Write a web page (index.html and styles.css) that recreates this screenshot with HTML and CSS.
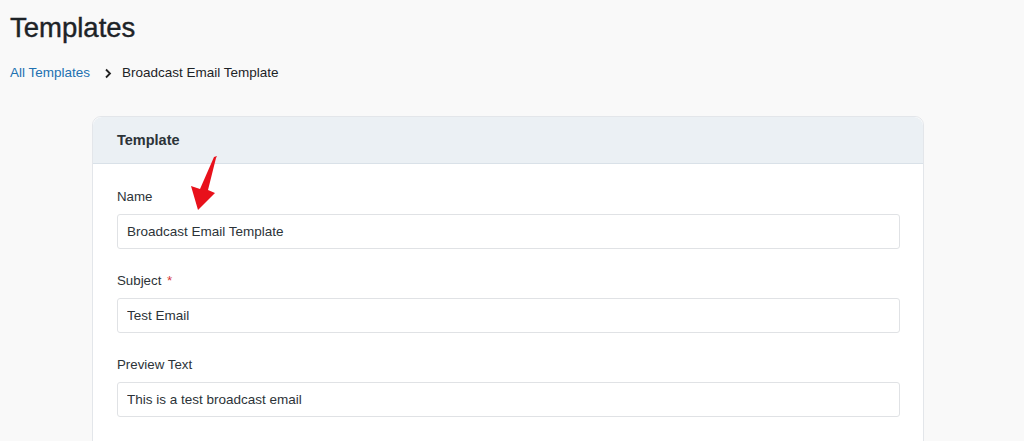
FILE: index.html
```html
<!DOCTYPE html>
<html>
<head>
    <title>Templates</title>
    <link rel="stylesheet" href="styles.css">
</head>
<body>
    <div class="page">
        <h1 class="page-title">Templates</h1>
        <div class="breadcrumb">
            <a href="#" class="crumb-link">All Templates</a>
            <svg class="crumb-sep" width="8" height="11" viewBox="0 0 8 11"><path d="M2 1.5 L6 5.5 L2 9.5" fill="none" stroke="#222" stroke-width="1.8"/></svg>
            <span class="crumb-current">Broadcast Email Template</span>
        </div>

        <div class="card">
            <div class="card-header">Template</div>
            <div class="card-body">
                <svg class="pointer" width="40" height="60" viewBox="0 0 40 60">
                    <path d="M34 2 L33 4 L25 36 L32 39 L15 56 L8 32 L17 35 L31 3 Z" fill="#e8111b"/>
                </svg>
                <div class="field">
                    <label>Name</label>
                    <input type="text" value="Broadcast Email Template">
                </div>
                <div class="field">
                    <label>Subject <span class="req">*</span></label>
                    <input type="text" value="Test Email">
                </div>
                <div class="field">
                    <label>Preview Text</label>
                    <input type="text" value="This is a test broadcast email">
                </div>
            </div>
        </div>
    </div>
</body>
</html>
```

FILE: styles.css
```css
body {
    margin: 0;
    font-family: "Liberation Sans", Arial, sans-serif;
    background: #f9f9f9;
    color: #2c3338;
}
.page {
    padding: 10px 10px 0;
}
.page-title {
    margin: 0;
    font-size: 27.5px;
    font-weight: normal;
    line-height: 36px;
    color: #1d2327;
    -webkit-text-stroke: 0.4px #1d2327;
}
.breadcrumb {
    display: flex;
    align-items: center;
    margin-top: 18px;
    font-size: 13.5px;
    line-height: 18px;
}
.crumb-link {
    color: #2271b1;
    text-decoration: none;
}
.crumb-sep {
    margin: 0 10px 0 14px;
}
.crumb-current {
    color: #1d2327;
}
.card {
    margin: 34px 0 0 82px;
    width: 830px;
    height: 400px;
    background: #fff;
    border: 1px solid #e3e6ea;
    border-radius: 9px;
}
.card-header {
    height: 46px;
    line-height: 46px;
    padding: 0 24px;
    background: #ebf0f4;
    border-bottom: 1px solid #d9e1e8;
    border-radius: 9px 9px 0 0;
    font-size: 14.5px;
    font-weight: bold;
    color: #2c3338;
}
.card-body {
    position: relative;
    padding: 25px 23px 0 24px;
}
.pointer {
    position: absolute;
    left: 90px;
    top: -10px;
}
.field {
    margin-bottom: 24px;
}
.field label {
    display: block;
    font-size: 13.3px;
    line-height: 16px;
    margin-bottom: 9px;
    color: #2c3338;
}
.req {
    color: #d63638;
    margin-left: 2px;
}
.field input {
    display: block;
    box-sizing: border-box;
    width: 100%;
    height: 35px;
    padding: 0 9px;
    border: 1px solid #e0e2e5;
    border-radius: 3px;
    background: #fff;
    font-family: inherit;
    font-size: 13.5px;
    color: #2c3338;
}
```
